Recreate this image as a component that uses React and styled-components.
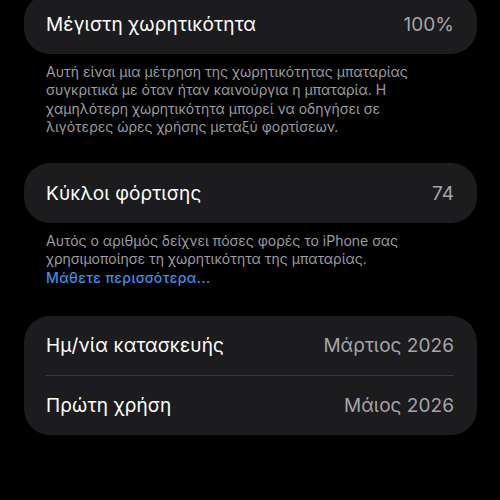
import React from "react";
import styled, { createGlobalStyle } from "styled-components";

const Global = createGlobalStyle`
  html, body { margin: 0; padding: 0; background: #000; }
  body { font-family: Inter, "Noto Sans", "DejaVu Sans", sans-serif; -webkit-font-smoothing: antialiased; }
  #root { width: 500px; height: 500px; overflow: hidden; background: #000; }
`;

const Page = styled.div`
  display: flex;
  flex-direction: column;
  padding: 0 23px 0 24px;
  margin-top: -6px;
`;

const Section = styled.section`
  display: flex;
  flex-direction: column;
  margin-bottom: ${p => p.$gap || 0}px;
`;

const Card = styled.div`
  background: #1c1c1e;
  border-radius: 26px;
  display: flex;
  flex-direction: column;
  padding: 0 23px 0 22px;
`;

const Row = styled.div`
  height: ${p => p.$h || 60}px;
  display: flex;
  align-items: center;
  justify-content: space-between;
  box-sizing: border-box;
  border-top: ${p => (p.$sep ? "1px solid #3a3a3c" : "none")};
`;

const Label = styled.span`
  color: #ffffff;
  font-size: 19px;
  font-weight: 400;
  letter-spacing: 0.15px;
`;

const Value = styled.span`
  color: #a5a5aa;
  font-size: 19px;
  font-weight: 400;
  letter-spacing: 0.05px;
`;

const Footer = styled.p`
  margin: 0;
  padding: 9px 22px 0 22px;
  color: #9c9ca1;
  font-size: 14px;
  line-height: 18.3px;
  letter-spacing: 0px;
`;

const Link = styled.span`
  color: #3d8fe6;
  font-weight: 500;
  letter-spacing: 0.4px;
`;

export default function App() {
  return (
    <>
      <Global />
      <Page>
        <Section $gap={27}>
          <Card>
            <Row>
              <Label>Μέγιστη χωρητικότητα</Label>
              <Value>100%</Value>
            </Row>
          </Card>
          <Footer>
            Αυτή είναι μια μέτρηση της χωρητικότητας μπαταρίας<br />
            συγκριτικά με όταν ήταν καινούργια η μπαταρία. Η<br />
            χαμηλότερη χωρητικότητα μπορεί να οδηγήσει σε<br />
            λιγότερες ώρες χρήσης μεταξύ φορτίσεων.
          </Footer>
        </Section>
        <Section $gap={29}>
          <Card>
            <Row>
              <Label>Κύκλοι φόρτισης</Label>
              <Value>74</Value>
            </Row>
          </Card>
          <Footer>
            Αυτός ο αριθμός δείχνει πόσες φορές το iPhone σας<br />
            χρησιμοποίησε τη χωρητικότητα της μπαταρίας.<br />
            <Link>Μάθετε περισσότερα...</Link>
          </Footer>
        </Section>
        <Section>
          <Card>
            <Row $h={59}>
              <Label>Ημ/νία κατασκευής</Label>
              <Value>Μάρτιος 2026</Value>
            </Row>
            <Row $h={60} $sep>
              <Label>Πρώτη χρήση</Label>
              <Value>Μάιος 2026</Value>
            </Row>
          </Card>
        </Section>
      </Page>
    </>
  );
}
